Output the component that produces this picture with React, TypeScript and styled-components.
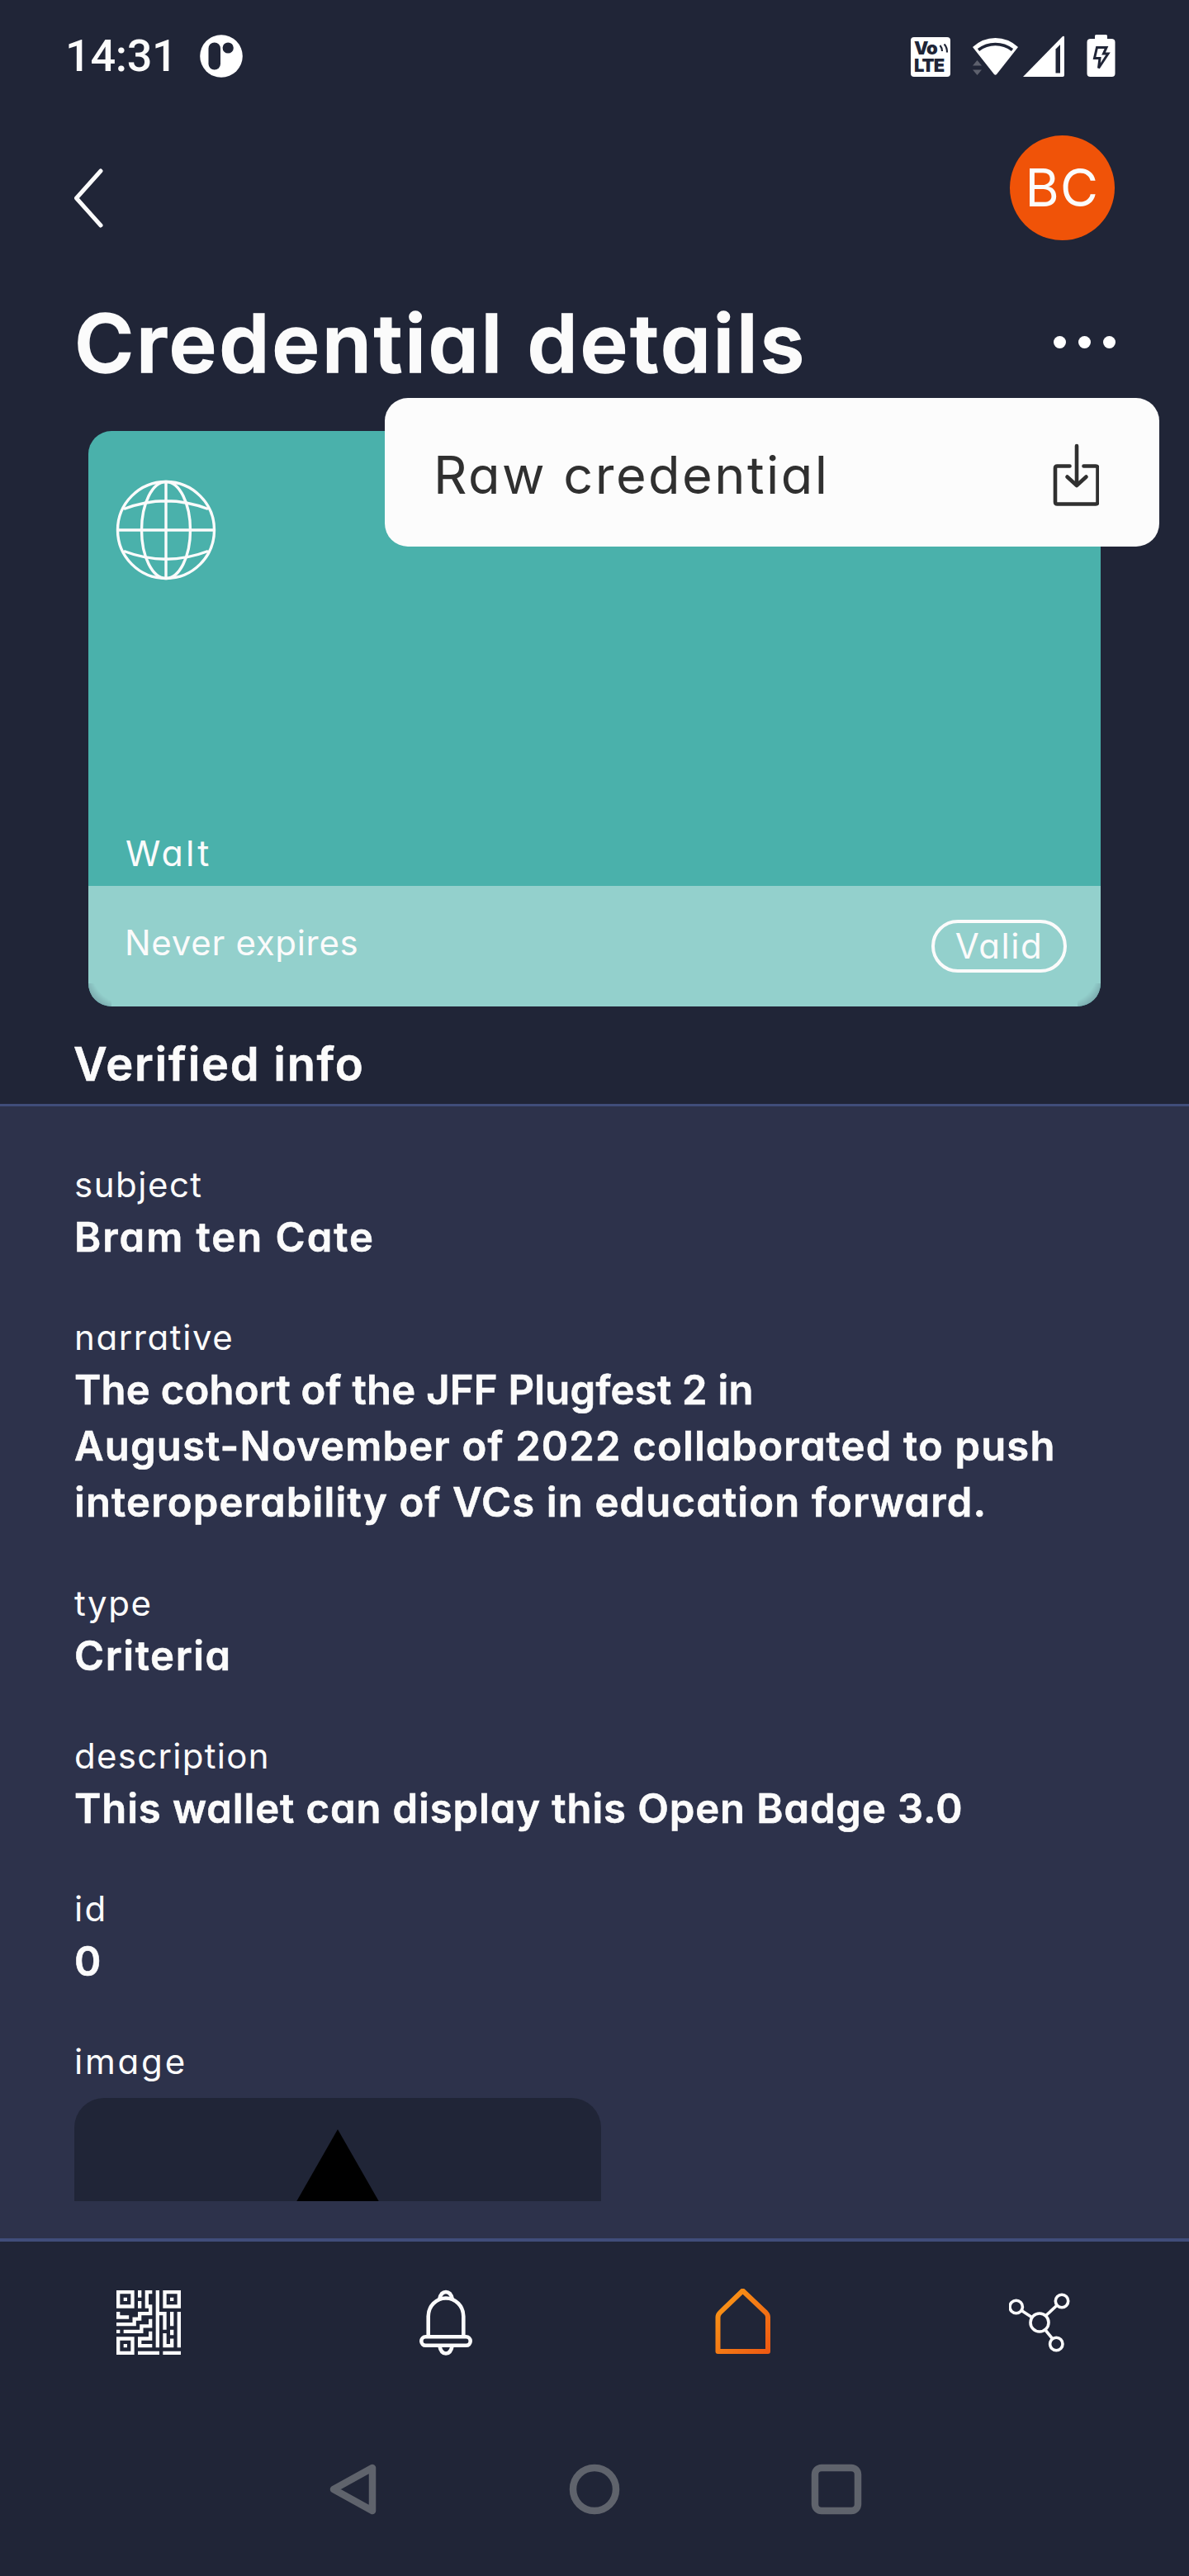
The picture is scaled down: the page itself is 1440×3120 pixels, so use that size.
import React from 'react';
import styled, { createGlobalStyle } from 'styled-components';

const color = {
  bg: '#202537',
  panel: '#2d324b',
  line: '#404d7a',
  text: '#fbfbfb',
  ink: '#303030',
  teal: '#4ab1ab',
  tealLight: '#93d0cc',
  orange: '#f05308',
  system: '#5f636c',
};

const GlobalStyle = createGlobalStyle`
  html, body { margin: 0; padding: 0; background: ${color.bg}; }
  * { box-sizing: border-box; }
  svg { display: block; flex: none; }
`;

const Screen = styled.div`
  display: flex;
  flex-direction: column;
  width: 1440px;
  height: 3120px;
  overflow: hidden;
  background: ${color.bg};
  color: ${color.text};
  font-family: Inter, 'Open Sans', 'Liberation Sans', sans-serif;
  font-feature-settings: 'cv11';
  white-space: nowrap;
`;

const StatusBar = styled.div`
  display: flex;
  justify-content: space-between;
  align-items: center;
  flex: none;
  height: 136px;
  padding: 0 89px 0 79px;
`;

const StatusLeft = styled.div`
  display: flex;
  align-items: center;
  gap: 27px;
`;

const Clock = styled.span`
  font-family: Roboto, sans-serif;
  font-weight: 500;
  font-size: 54px;
  line-height: 60px;
  letter-spacing: -0.3px;
`;

const StatusIcons = styled.div`
  display: flex;
  align-items: center;
`;

const VolteBadge = styled.div`
  display: flex;
  flex-direction: column;
  justify-content: center;
  width: 48px;
  height: 48px;
  padding-left: 4px;
  margin: 2px 25px 0 0;
  border-radius: 4px;
  background: #fff;
  color: ${color.bg};
  font-family: Inter, sans-serif;
  font-weight: 900;
  font-size: 22px;
  line-height: 21px;
  letter-spacing: -1px;
`;

const VolteTop = styled.span`
  display: flex;
  align-items: center;
  gap: 2px;
`;

const SignalSlot = styled.div`
  padding: 0 27px 0 5px;
`;

const HeaderRow = styled.header`
  display: flex;
  justify-content: space-between;
  align-items: center;
  flex: none;
  height: 182px;
  padding: 0 90px 0 88px;
`;

const BackButton = styled.div`
  padding-top: 25px;
`;

const Avatar = styled.div`
  display: flex;
  justify-content: center;
  align-items: center;
  width: 127px;
  height: 127px;
  border-radius: 50%;
  background: ${color.orange};
  font-size: 63px;
  letter-spacing: 1.3px;
`;

const TitleRow = styled.div`
  position: relative;
  display: flex;
  justify-content: space-between;
  align-items: center;
  flex: none;
  height: 196px;
  padding: 0 89px 0 90px;
  margin-bottom: 8px;
`;

const Title = styled.h1`
  margin: 0;
  font-size: 98px;
  font-weight: 600;
  line-height: 120px;
  letter-spacing: 2.8px;
  -webkit-text-stroke: 1.4px ${color.text};
`;

const MoreDots = styled.div`
  display: flex;
  gap: 15px;
  padding-bottom: 4px;
`;

const Dot = styled.span`
  width: 15px;
  height: 15px;
  border-radius: 50%;
  background: #fff;
`;

const Menu = styled.div`
  position: absolute;
  z-index: 2;
  top: 164px;
  right: 36px;
  display: flex;
  justify-content: space-between;
  align-items: center;
  width: 938px;
  height: 180px;
  padding: 0 73px 0 59px;
  border-radius: 28px;
  background: #fcfcfc;
  color: ${color.ink};
`;

const MenuLabel = styled.span`
  font-size: 63px;
  line-height: 80px;
  letter-spacing: 2.46px;
  padding-top: 6px;
`;

const MenuIcon = styled.span`
  padding-top: 8px;
`;

const Card = styled.section`
  display: flex;
  flex-direction: column;
  flex: none;
  height: 697px;
  margin: 0 107px;
  border-radius: 28px;
  overflow: hidden;
  background: ${color.teal};
`;

const CardBody = styled.div`
  display: flex;
  flex-direction: column;
  justify-content: space-between;
  align-items: flex-start;
  flex: 1;
  padding: 58px 31px 10px;
`;

const Issuer = styled.span`
  padding-left: 14px;
  font-size: 43px;
  line-height: 60px;
  letter-spacing: 3.2px;
`;

const CardFooter = styled.div`
  display: flex;
  justify-content: space-between;
  align-items: center;
  height: 146px;
  padding: 0 41px 0 44px;
  background:
    radial-gradient(circle at 44px -16px, transparent 40px, rgba(70, 85, 105, 0.34) 52px) 0 100% / 28px 28px no-repeat,
    radial-gradient(circle at -16px -16px, transparent 40px, rgba(70, 85, 105, 0.34) 52px) 100% 100% / 28px 28px no-repeat,
    ${color.tealLight};
`;

const Expiry = styled.span`
  padding-bottom: 9px;
  font-size: 42px;
  line-height: 60px;
  letter-spacing: 0.7px;
`;

const StatusPill = styled.span`
  display: flex;
  justify-content: center;
  align-items: center;
  width: 164px;
  height: 64px;
  border: 4px solid ${color.text};
  border-radius: 32px;
  font-size: 42px;
  line-height: 50px;
  letter-spacing: 1.6px;
`;

const SectionTitle = styled.h2`
  display: flex;
  align-items: center;
  flex: none;
  height: 118px;
  margin: 0;
  padding: 22px 0 0 89px;
  font-size: 56px;
  font-weight: 600;
  letter-spacing: 1.7px;
  -webkit-text-stroke: 0.6px ${color.text};
`;

const Panel = styled.main`
  flex: none;
  height: 1374px;
  padding-bottom: 45px;
  border-top: 3px solid ${color.line};
  background: ${color.panel};
`;

const FieldList = styled.dl`
  display: flex;
  flex-direction: column;
  gap: 56.3px;
  height: 100%;
  margin: 0;
  padding: 64px 90px 0;
  overflow: hidden;
`;

const Field = styled.div`
  display: flex;
  flex-direction: column;
  flex: none;
`;

const Label = styled.dt<{ $track: number }>`
  font-size: 42px;
  line-height: 61px;
  letter-spacing: ${(p) => p.$track}px;
`;

const Value = styled.dd`
  margin: 0;
  font-size: 49px;
  font-weight: 600;
  line-height: 68px;
  -webkit-text-stroke: 0.6px ${color.text};
`;

const Line = styled.span<{ $track: number }>`
  display: block;
  letter-spacing: ${(p) => p.$track}px;
`;

const ImageFrame = styled.dd`
  display: flex;
  justify-content: center;
  width: 638px;
  height: 400px;
  margin: 14px 0 0;
  padding-top: 38px;
  border-radius: 36px;
  background: ${color.bg};
`;

const TabBar = styled.nav`
  display: grid;
  grid-template-columns: repeat(4, 1fr);
  flex: none;
  height: 199px;
  border-top: 4px solid ${color.line};
`;

const Tab = styled.div`
  display: flex;
  justify-content: center;
  align-items: center;
`;

const SystemBar = styled.div`
  display: flex;
  justify-content: center;
  align-items: center;
  gap: 229px;
  flex: 1;
`;

interface FieldData {
  label: string;
  track: number;
  lines: { text: string; track: number }[];
}

const fields: FieldData[] = [
  { label: 'subject', track: 1.5, lines: [{ text: 'Bram ten Cate', track: 1.97 }] },
  {
    label: 'narrative',
    track: 1.6,
    lines: [
      { text: 'The cohort of the JFF Plugfest 2 in', track: 0.24 },
      { text: 'August-November of 2022 collaborated to push', track: 1.16 },
      { text: 'interoperability of VCs in education forward.', track: 1.15 },
    ],
  },
  { label: 'type', track: 1.5, lines: [{ text: 'Criteria', track: 1.6 }] },
  {
    label: 'description',
    track: 1.3,
    lines: [{ text: 'This wallet can display this Open Badge 3.0', track: 0.9 }],
  },
  { label: 'id', track: 2.4, lines: [{ text: '0', track: 0 }] },
];

const AppMark = () => (
  <svg width="52" height="52" viewBox="0 0 52 52">
    <circle cx="26" cy="26" r="25.8" fill="#fff" />
    <rect x="10.5" y="9.5" width="14.5" height="33" rx="7.2" fill={color.bg} />
    <circle cx="34.2" cy="16" r="6.6" fill={color.bg} />
  </svg>
);

const Waves = () => (
  <svg width="12" height="12" viewBox="0 0 12 12" fill="none" stroke={color.bg} strokeWidth="2.2">
    <path d="M1.5 2Q4 5 4 9M6.5 0.5Q10 4 10 10.5" />
  </svg>
);

const Wifi = () => (
  <svg width="58" height="50" viewBox="0 0 58 50">
    <path d="M2 14Q14 3 29.5 3T57 14L31 47Q29.5 48.500 28 47Z" fill="#fff" />
    <path d="M9 17.500Q18 10.500 29.500 10.500T50 17.500" stroke={color.bg} strokeWidth="3.6" fill="none" />
    <path d="M2 36.500L7.500 30L13 36.500ZM2 41.500L7.500 48L13 41.500Z" fill="#5d606d" />
  </svg>
);

const Signal = () => (
  <svg width="50" height="51" viewBox="0 0 50 51">
    <path d="M0 50L48 1Q50 0 50 2V48Q50 50 48 50Z" fill="#fff" />
    <path d="M39.500 16.500L45 11V45.500H39.500Z" fill={color.bg} />
  </svg>
);

const Battery = () => (
  <svg width="35" height="52" viewBox="0 0 35 52">
    <path d="M10 5V1.500Q10 0 11.500 0H23.500Q25 0 25 1.500V5H30Q34.500 5 34.500 9V47Q34.500 51 30.500 51H4.500Q0.500 51 0.500 47V9Q0.500 5 5 5Z" fill="#fff" />
    <path d="M12.500 15.500H24L20.500 23H26L14.500 40.500L16 28.500H9.500Z" fill="none" stroke={color.bg} strokeWidth="3" />
  </svg>
);

const BackIcon = () => (
  <svg width="38" height="72" viewBox="0 0 38 72" fill="none" stroke={color.text} strokeWidth="5" strokeLinecap="round" strokeLinejoin="round">
    <path d="M34 3L4.500 36L34 69" />
  </svg>
);

const DownloadIcon = () => (
  <svg width="60" height="80" viewBox="0 0 60 80" fill="none" stroke={color.ink} strokeWidth="4.600" strokeLinecap="round" strokeLinejoin="round">
    <path d="M24.500 28.500H9.500Q7 28.500 7 31V72Q7 74.500 9.500 74.500H56Q58.500 74.500 58.500 72V31Q58.500 28.500 56 28.500H41.500" />
    <path d="M33 4V52M21.500 41.500L33 52L44.500 41.500" />
  </svg>
);

const Globe = () => (
  <svg width="126" height="124" viewBox="0 0 126 124" fill="none" stroke={color.text} strokeWidth="3.400">
    <circle cx="63" cy="62" r="58.500" />
    <ellipse cx="63" cy="62" rx="29.500" ry="58.500" />
    <path d="M63 3.500V120.500M4.500 62H121.500M12 36.500Q63 17 114 36.500M12 87.500Q63 107 114 87.500" />
  </svg>
);

const QrIcon = () => (
  <svg width="78" height="78" viewBox="0 0 18 18" fill="none" stroke={color.text} strokeWidth="1">
    <path d="M0.500 0.500H4.500V4.500H0.500ZM13.500 0.500H17.500V4.500H13.500ZM0.500 13.500H4.500V17.500H0.500Z" />
    <path d="M2 2.500H3M15 2.500H16M2 15.500H3" />
    <path d="M6.500 0V2M6.500 3V5" />
    <path d="M10 0.500H8.500V4.500H9.500V6.500H6.500V8H5V9.500H0" />
    <path d="M0.500 6V7.500H3.500M0 11.500H1" />
    <path d="M2 11.500H7V10H9.500V8" />
    <path d="M9.500 11.500V13.500H6.500V15.500H10" />
    <path d="M11.500 0V16M12 6.500H13.500V11M15.500 6V10M15.500 11V12.500M17.500 6V16" />
    <path d="M13.500 12V15.500H15.500V13.500M6 17.500H12M13 17.500H18" />
  </svg>
);

const BellIcon = () => (
  <svg width="68" height="84" viewBox="0 0 68 84" fill="none" stroke={color.text} strokeWidth="4.600">
    <path d="M12.700 58.500V34.500A21.300 22 0 0 1 55.300 34.500V58.500" />
    <rect x="4.300" y="59.300" width="59.400" height="10.500" rx="5.200" />
    <path d="M26.300 13.500Q28 5 34 5T41.700 13.500" />
    <path d="M26.300 70Q28 79.500 34 79.500T41.700 70" />
  </svg>
);

const HomeIcon = () => (
  <svg width="68" height="82" viewBox="0 0 68 82" fill="none" strokeWidth="6" strokeLinejoin="round">
    <defs>
      <linearGradient id="home" x1="0" y1="0" x2="1" y2="1">
        <stop offset="0" stopColor="#f99a17" />
        <stop offset="1" stopColor="#ef5a12" />
      </linearGradient>
    </defs>
    <path d="M33.500 2.500L61.500 29Q64 31.500 64 34.500V76H3.500V34.500Q3.500 31.500 6 29Z" stroke="url(#home)" />
  </svg>
);

const NodesIcon = () => (
  <svg width="76" height="74" viewBox="0 0 76 74" fill="none" stroke={color.text} strokeWidth="3.600">
    <circle cx="37" cy="37" r="11" />
    <circle cx="8.700" cy="18" r="7.700" />
    <circle cx="64" cy="11" r="7.700" />
    <circle cx="57.300" cy="63" r="7.700" />
    <path d="M15.200 22.500L27.500 30.500M58 16.200L44.800 28.500M52.500 56.500L44 46" />
  </svg>
);

const SysBack = () => (
  <svg width="64" height="64" viewBox="0 0 64 64" fill="none" stroke={color.system} strokeWidth="8.500" strokeLinejoin="round">
    <path d="M9 32L56 6V58Z" />
  </svg>
);

const SysHome = () => (
  <svg width="64" height="64" viewBox="0 0 64 64" fill="none" stroke={color.system} strokeWidth="8.500">
    <circle cx="32" cy="32" r="26" />
  </svg>
);

const SysRecent = () => (
  <svg width="64" height="64" viewBox="0 0 64 64" fill="none" stroke={color.system} strokeWidth="8.500">
    <rect x="6" y="6" width="52" height="52" rx="8" />
  </svg>
);

export default function App() {
  return (
    <>
      <GlobalStyle />
      <Screen>
        <StatusBar>
          <StatusLeft>
            <Clock>14:31</Clock>
            <AppMark />
          </StatusLeft>
          <StatusIcons>
            <VolteBadge>
              <VolteTop>
                Vo
                <Waves />
              </VolteTop>
              <span>LTE</span>
            </VolteBadge>
            <Wifi />
            <SignalSlot>
              <Signal />
            </SignalSlot>
            <Battery />
          </StatusIcons>
        </StatusBar>

        <HeaderRow>
          <BackButton>
            <BackIcon />
          </BackButton>
          <Avatar>BC</Avatar>
        </HeaderRow>

        <TitleRow>
          <Title>Credential details</Title>
          <MoreDots>
            <Dot />
            <Dot />
            <Dot />
          </MoreDots>
          <Menu>
            <MenuLabel>Raw credential</MenuLabel>
            <MenuIcon>
              <DownloadIcon />
            </MenuIcon>
          </Menu>
        </TitleRow>

        <Card>
          <CardBody>
            <Globe />
            <Issuer>Walt</Issuer>
          </CardBody>
          <CardFooter>
            <Expiry>Never expires</Expiry>
            <StatusPill>Valid</StatusPill>
          </CardFooter>
        </Card>

        <SectionTitle>Verified info</SectionTitle>

        <Panel>
          <FieldList>
            {fields.map((field) => (
              <Field key={field.label}>
                <Label $track={field.track}>{field.label}</Label>
                <Value>
                  {field.lines.map((line) => (
                    <Line key={line.text} $track={line.track}>
                      {line.text}
                    </Line>
                  ))}
                </Value>
              </Field>
            ))}
            <Field>
              <Label $track={2.8}>image</Label>
              <ImageFrame>
                <svg width="320" height="280" viewBox="0 0 320 280">
                  <path d="M160 0L320 280H0Z" fill="#000" />
                </svg>
              </ImageFrame>
            </Field>
          </FieldList>
        </Panel>

        <TabBar>
          <Tab>
            <QrIcon />
          </Tab>
          <Tab>
            <BellIcon />
          </Tab>
          <Tab>
            <HomeIcon />
          </Tab>
          <Tab>
            <NodesIcon />
          </Tab>
        </TabBar>

        <SystemBar>
          <SysBack />
          <SysHome />
          <SysRecent />
        </SystemBar>
      </Screen>
    </>
  );
}
